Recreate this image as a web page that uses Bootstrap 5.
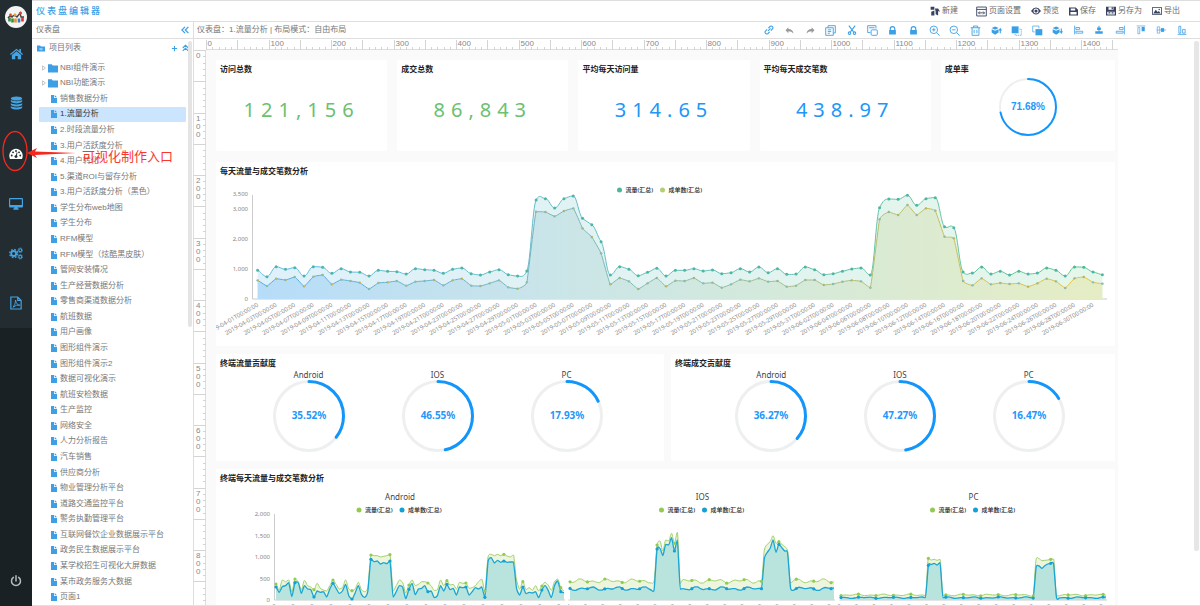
<!DOCTYPE html>
<html lang="zh-CN">
<head>
<meta charset="utf-8">
<meta name="viewport" content="width=device-width, initial-scale=1">
<title>仪表盘编辑器</title>
<link rel="stylesheet" href="https://cdn.jsdelivr.net/npm/bootstrap@5.3.0/dist/css/bootstrap.min.css">
<style>
  :root { --blue: #3b9fe6; --line: #dedede; --ink: #777; }
  body { font-family: "Liberation Sans", "Noto Sans CJK SC", sans-serif; font-size: 8px; line-height: 16px; color: var(--ink); background: #fff; }
  svg { display: block; flex: none; }
  button { border: 0; background: none; padding: 0; color: inherit; line-height: inherit; }
  a { color: inherit; text-decoration: none; }

  .rail { width: 32px; background: #192124; }
  .rail-menu { height: 328px; background: #222c31; padding-top: 6px; }
  .rail a { display: flex; align-items: center; justify-content: center; height: 50px; color: #43a3e3; }
  .rail a.brand-mark { height: 22px; }
  .rail a.active { color: #fff; }
  .rail a.power { color: #b4bcc0; }

  .topbar { height: 22px; border-top: 1px solid var(--line); border-bottom: 1px solid var(--line); }
  .topbar h1 { font-size: 9px; letter-spacing: 2px; line-height: 18px; color: #3b9fe6; margin: 0 0 0 4px; font-weight: 500; }
  .actions { gap: 10px; margin-right: 20px; color: #6b6b6b; }
  .actions button { display: flex; align-items: center; gap: 2px; }
  .actions svg { color: #39425e; }

  .explorer { width: 162px; border-right: 1px solid var(--line); }
  .pane-head { height: 17px; border-bottom: 1px solid var(--line); }
  .explorer .pane-head { padding: 0 4px 0 4px; }
  .explorer button, .root-row button { color: var(--blue); }
  .root-row { height: 18px; padding: 0 4px 0 5px; }
  .tree { display: grid; grid-auto-rows: 1fr; margin: 3px 7px 0; padding: 0; list-style: none; line-height: 14px; flex: 1 1 0; min-height: 0; }
  .tree a { display: flex; align-items: center; height: 100%; gap: 2px; padding-left: 11px; white-space: nowrap; }
  .tree a.folder { padding-left: 3px; }
  .tree a svg { color: #3f9fe4; }
  .tree a.active { background: #cce5ff; color: #333; border-radius: 1px; }
  .thumb { position: absolute; right: 1px; top: 2px; width: 4px; height: 286px; background: #e4e4e4; border-radius: 2px; }

  .work .pane-head { padding: 0 12px 0 3px; }
  .tools { width: 425px; color: #3b9fe6; }
  .tools button { width: 12px; height: 12px; }
  .tools .muted { color: #999; }
  .ruler-x { height: 11px; margin-left: 12px; }
  .ruler-y { width: 12px; }
  .stage { padding-right: 82px; }
  .stage-thumb { position: absolute; right: 1px; top: 2px; width: 5px; height: 510px; background: #e6e6e6; border-radius: 2px; }
  .board { background: #fafafa; padding: 10px 3px 0 10px; gap: 8px; font-family: "Noto Sans", "Noto Sans CJK SC", sans-serif; }
  .tile { background: #fff; border-radius: 2px; overflow: hidden; }
  .tile h2 { font-size: 8px; line-height: 18px; font-weight: 600; color: #222; margin: 0 0 0 4px; }
  .kpis { display: grid; grid-template-columns: repeat(4, 171fr) 174fr; gap: 10px; margin-bottom: 3px; }
  .kpis .tile { height: 91px; }
  .figure-num { font-size: 20px; line-height: 64px; letter-spacing: 6px; text-align: center; }
  .green { color: #6cc070; }
  .azure { color: #2196f9; }
  .pair { display: grid; grid-template-columns: 448fr 444fr; gap: 7px; }
  .pair .tile { height: 107px; }
  .gauges { display: grid; grid-template-columns: repeat(3, 1fr); padding: 0 33px 0 28px; text-align: center; color: #444; line-height: 8px; }
  .gauges.shifted { padding: 0 22px 0 36px; }
  .gauges svg, .rate svg { margin: 0 auto; }
  .gauges { margin-top: -1px; }
  .trio { display: grid; grid-template-columns: 333fr 269fr 270fr; gap: 1px; padding: 0 6px 0 17px; }
  .pct { font-weight: 700; font-size: 10px; fill: #1f97fb; text-anchor: middle; }
  .rate .pct { font-family: "Liberation Sans", sans-serif; }
  .tick-text { font-size: 6px; fill: #888; }
  .key-text { font-size: 6px; fill: #222; font-weight: 500; }
  .plot-title { font-size: 8px; fill: #444; text-anchor: middle; }
  .ruler-text { font-size: 8px; fill: #888; }
  .callout { position: absolute; left: 0; top: 128px; pointer-events: none; }
  .callout-text { position: absolute; left: 82px; top: 149px; font-size: 13px; line-height: 16px; color: #f8382c; white-space: nowrap; }
</style>
</head>
<body>
<div class="d-flex vh-100 overflow-hidden position-relative">

  <nav class="rail d-flex flex-column flex-shrink-0 justify-content-between" aria-label="主导航">
    <div class="rail-menu">
      <a href="#" class="brand-mark" aria-label="NBI"><svg width="22" height="22" viewBox="0 0 22 22"><circle cx="11" cy="11" r="11" fill="#f4f4f4"/><path d="M4.500 15.500v-4M7.500 16.500v-4" stroke="#3a8f45" stroke-width="2.600"/><path d="M10.500 16.500v-4" stroke="#e8902c" stroke-width="2.600"/><path d="M14 16.500v-4" stroke="#2f7fc4" stroke-width="2.600"/><path d="M17.500 15.500v-4" stroke="#d33" stroke-width="2.600"/><path d="M3 12q2-3 4-1q2-3 5 0l3-4 1 4h3" fill="none" stroke="#444" stroke-width="1.400"/><circle cx="15.500" cy="7" r="1.600" fill="#d9452f"/><circle cx="5.500" cy="9" r="1.400" fill="#d9452f"/><circle cx="10" cy="8.800" r="1.400" fill="#e8a02c"/></svg></a>
      <a href="#" aria-label="首页"><svg width="13" height="13" viewBox="0 0 16 16" fill="currentColor"><path d="M8 2 0 8.600l1 1.200L8 4l7 5.800 1-1.200-2.500-2.100V2.500h-2v2.300zM8 5.200 2.300 9.900V15H6.500v-4h3v4h4.200V9.900z"/></svg></a>
      <a href="#" aria-label="数据源"><svg width="13" height="14" viewBox="0 0 16 16" fill="currentColor"><ellipse cx="8" cy="2.500" rx="7" ry="2.500"/><path d="M1 4c2 2.400 12 2.400 14 0v2.300c-1 3-13 3-14 0zM1 7.900c2 2.400 12 2.400 14 0v2.300c-1 3-13 3-14 0zM1 11.800c2 2.400 12 2.400 14 0v1.700c-1 3.300-13 3.300-14 0z"/></svg></a>
      <a href="#" class="active" aria-label="可视化"><svg width="14" height="13" viewBox="0 0 18 16" fill="currentColor"><path d="M9 2a9 9 0 0 0-7.700 13h15.400A9 9 0 0 0 9 2z"/><g fill="#222c31"><circle cx="3.500" cy="10.500" r="1.200"/><circle cx="5.200" cy="6.500" r="1.200"/><circle cx="9" cy="4.800" r="1.200"/><circle cx="12.900" cy="6.500" r="1.200"/><circle cx="14.500" cy="10.500" r="1.200"/><circle cx="9" cy="12" r="1.900"/><path d="m8.500 11.500 1.400-5 1 .3-1 5z"/></g></svg></a>
      <a href="#" aria-label="大屏"><svg width="14" height="13" viewBox="0 0 18 16" fill="currentColor"><path fill-rule="evenodd" d="M1.500 1h15Q18 1 18 2.500v9q0 1.500-1.500 1.500H11l.5 1.500h1V16h-7v-1.500h1L7 13H1.500Q0 13 0 11.500v-9Q0 1 1.500 1zm0 1.500v7.500h15V2.500z"/></svg></a>
      <a href="#" aria-label="设置"><svg width="14" height="13" viewBox="0 0 18 16" fill="none" stroke="currentColor"><circle cx="6" cy="8" r="3.200" stroke-width="2.400"/><circle cx="6" cy="8" r="5.200" stroke-width="1.600" stroke-dasharray="2.200 1.900"/><circle cx="14.500" cy="3.800" r="1.900" stroke-width="1.400"/><circle cx="14.500" cy="3.800" r="3" stroke-width="1" stroke-dasharray="1.400 1"/><circle cx="14.500" cy="12.200" r="1.900" stroke-width="1.400"/><circle cx="14.500" cy="12.200" r="3" stroke-width="1" stroke-dasharray="1.400 1"/></svg></a>
      <a href="#" aria-label="报告"><svg width="12" height="14" viewBox="0 0 14 16" fill="none" stroke="currentColor" stroke-width="1.400"><path d="M1 1h8l4 4v10H1zM9 1v4h4"/><path d="M3.500 13q3-3 3-8.500q1 6 5 6q-4-1-8 2.500z" stroke-width="1.100"/></svg></a>
    </div>
    <a href="#" class="power" aria-label="退出"><svg width="12" height="12" viewBox="0 0 16 16" fill="none" stroke="currentColor" stroke-width="2" stroke-linecap="round"><path d="M8 1v7M4.500 3.200a6 6 0 1 0 7 0"/></svg></a>
  </nav>

  <div class="d-flex flex-column flex-grow-1 overflow-hidden border-bottom">
    <header class="topbar d-flex justify-content-between align-items-center flex-shrink-0">
      <h1>仪表盘编辑器</h1>
      <div class="actions d-flex align-items-center" id="actions"></div>
    </header>

    <div class="d-flex flex-grow-1 overflow-hidden">
      <aside class="explorer d-flex flex-column flex-shrink-0">
        <div class="pane-head d-flex justify-content-between align-items-center flex-shrink-0">
          <span>仪表盘</span>
          <button aria-label="收起"><svg width="8" height="8" viewBox="0 0 8 8" fill="none" stroke="currentColor" stroke-width="1.200"><path d="M4 .8.900 4 4 7.200M7.400.8 4.300 4l3.100 3.200"/></svg></button>
        </div>
        <div class="d-flex flex-column flex-grow-1 position-relative">
          <div class="root-row d-flex align-items-center flex-shrink-0">
            <svg width="8" height="7" viewBox="0 0 16 14" fill="#3b9fe6"><path d="M0 1h6l2 2h8v10H0z"/><path d="M4 8h8M8 6v5" stroke="#cde6fa" stroke-width="1.400"/></svg>
            <span class="ms-1 me-auto">项目列表</span>
            <button aria-label="添加"><svg width="7" height="7" viewBox="0 0 8 8" stroke="currentColor" stroke-width="1.200"><path d="M4 1v6M1 4h6"/></svg></button>
            <button class="ms-1" aria-label="折叠"><svg width="7" height="8" viewBox="0 0 8 8" fill="none" stroke="currentColor" stroke-width="1.200"><path d="M.8 4 4 .9 7.200 4M.8 7.400 4 4.300l3.200 3.100"/></svg></button>
          </div>
          <ul class="tree" id="tree"></ul>
          <div class="thumb"></div>
        </div>
      </aside>

      <main class="work d-flex flex-column flex-grow-1 overflow-hidden">
        <div class="pane-head d-flex justify-content-between align-items-center flex-shrink-0">
          <span>仪表盘：1.流量分析 | 布局模式：自由布局</span>
          <div class="tools d-flex justify-content-between" id="tools"></div>
        </div>
        <div class="stage d-flex flex-column flex-grow-1 overflow-hidden position-relative">
          <div class="ruler-x flex-shrink-0" id="rulerX"></div>
          <div class="d-flex flex-grow-1 overflow-hidden">
            <div class="ruler-y flex-shrink-0 overflow-hidden" id="rulerY"></div>
            <div class="board d-flex flex-column flex-grow-1 overflow-hidden">
              <section class="kpis flex-shrink-0">
                <div class="tile"><h2>访问总数</h2><div class="figure-num green">121,156</div></div>
                <div class="tile"><h2>成交总数</h2><div class="figure-num green">86,843</div></div>
                <div class="tile"><h2>平均每天访问量</h2><div class="figure-num azure">314.65</div></div>
                <div class="tile"><h2>平均每天成交笔数</h2><div class="figure-num azure">438.97</div></div>
                <div class="tile rate"><h2>成单率</h2><div data-gauge="71.68" data-size="58" data-stroke="2"></div></div>
              </section>
              <section class="tile flex-shrink-0"><h2>每天流量与成交笔数分析</h2><div id="daily"></div></section>
              <section class="pair flex-shrink-0">
                <div class="tile"><h2>终端流量贡献度</h2>
                  <div class="gauges">
                    <div>Android<div data-gauge="35.52"></div></div>
                    <div>IOS<div data-gauge="46.55"></div></div>
                    <div>PC<div data-gauge="17.93"></div></div>
                  </div></div>
                <div class="tile"><h2>终端成交贡献度</h2>
                  <div class="gauges shifted">
                    <div>Android<div data-gauge="36.27"></div></div>
                    <div>IOS<div data-gauge="47.27"></div></div>
                    <div>PC<div data-gauge="16.47"></div></div>
                  </div></div>
              </section>
              <section class="tile flex-shrink-0"><h2>终端每天流量与成交笔数分析</h2>
                <div class="trio"><div id="android"></div><div id="ios"></div><div id="pc"></div></div>
              </section>
            </div>
          </div>
          <div class="stage-thumb"></div>
        </div>
      </main>
    </div>
  </div>

  <svg class="callout" width="80" height="48" viewBox="0 0 80 48"><ellipse cx="15" cy="23" rx="12" ry="19.500" fill="none" stroke="#f5281e" stroke-width="1.300"/><path d="M27 25l10-5-2 3.500L76 25l-41 2 2 3z" fill="#f5281e"/></svg>
  <div class="callout-text">可视化制作入口</div>
</div>

<script src="https://cdn.jsdelivr.net/npm/bootstrap@5.3.0/dist/js/bootstrap.bundle.min.js"></script>
<script>
const $ = id => document.getElementById(id);
const icon = (body, size, attrs = 'fill="currentColor"') => `<svg width="${size}" height="${size}" viewBox="0 0 16 16" ${attrs}>${body}</svg>`;
const outline = 'fill="none" stroke="currentColor" stroke-width="1.3"';

/* Project tree */
const folder = icon('<path d="M0 2h6l1.500 2H16v11H0z"/>', 10);
const file = icon('<path d="M2 0h6v6h6v10H2zM9.500 0 14 4.500H9.500z"/>', 8);
const arrow = '<svg width="4" height="6" viewBox="0 0 4 6" fill="none" stroke="#aaa" stroke-width=".7"><path d="M.6.800 3.400 3 .6 5.200z"/></svg>';
const projects = ['销售数据分析','1.流量分析','2.时段流量分析','3.用户活跃度分析','4.用户转化','5.渠道ROI与留存分析','3.用户活跃度分析（黑色）','学生分布web地图','学生分布','RFM模型','RFM模型（炫酷黑皮肤）','管网安装情况','生产经营数据分析','零售商渠道数据分析','航班数据','用户画像','图形组件演示','图形组件演示2','数据可视化演示','航班安检数据','生产监控','网络安全','人力分析报告','汽车销售','供应商分析','物业管理分析平台','道路交通监控平台','警务执勤管理平台','互联网餐饮企业数据展示平台','政务民生数据展示平台','某学校招生可视化大屏数据','某市政务服务大数据','页面1'];
$('tree').innerHTML = ['NBI组件演示','NBI功能演示'].map(t => `<li><a href="#" class="folder">${arrow}${folder}${t}</a></li>`).join('')
  + projects.map((t, i) => `<li><a href="#"${i === 1 ? ' class="active"' : ''}>${file}${t}</a></li>`).join('');

/* Header actions */
$('actions').innerHTML = [
  ['新建', icon('<path d="M1 1h6v5H1zM2 9l5-2v8H2zM8 4h5l3 5-3-1v7l-4-2V9z"/>', 10), 'me-2'],
  ['页面设置', icon('<path d="M1 1.500h14v13H1zM1 5h14M4 10h8M5.500 8 3.500 10l2 2M10.500 8l2 2-2 2"/>', 11, outline), ''],
  ['预览', icon('<path fill-rule="evenodd" d="M0 8q8-11 16 0-8 11-16 0zm8-4a4 4 0 1 0 0 8 4 4 0 0 0 0-8z"/><circle cx="8" cy="8" r="2.500"/>', 10), ''],
  ['保存', icon('<path fill-rule="evenodd" d="M0 1h12l4 4v10H0zM3 2.500V6h8V2.500zM2.500 9v4.500h11V9z"/>', 9), ''],
  ['另存为', icon('<path fill-rule="evenodd" d="M0 1h16v14H0zM4 2v4h8V2zM2 9v4.500h12V9z"/><path d="M9 2h2v3H9zM4 10h3v2H4zM9 10h3v2H9z"/>', 10), ''],
  ['导出', icon('<path fill-rule="evenodd" d="M0 2h16v12H0zm1.300 1.300v9.400h13.400V3.300z"/><path d="m2 12 4-6 3 3.500L11 8l3 4z"/><circle cx="11.500" cy="5.500" r="1.200"/>', 10), '']
].map(([t, g, c]) => `<button class="${c}">${g}${t}</button>`).join('');

/* Editing tools */
const lock = icon('<path fill-rule="evenodd" d="M3 7V5a5 5 0 0 1 10 0v2h1v8H2V7zm2 0h6V5a3 3 0 0 0-6 0z"/>', 9);
const cube = '<path d="m6 2 5 2.500-5 2.500-5-2.500zM1 6l5 2.500L11 6v5l-5 3-5-3z"/>';
$('tools').innerHTML = [
  ['链接', icon('<path d="M6.500 9.500l4-4M7 5l3-3q2-1 3.500.5T14 6l-3 3M9 11l-3 3q-2 1-3.500-.5T2 10l3-3"/>', 10, 'fill="none" stroke="currentColor" stroke-width="1.700"')],
  ['撤销', icon('<path d="M6 2v3.500q8 0 9 8-3-4-9-4V13L1 7.500z"/>', 9), 'muted'],
  ['重做', icon('<path d="M10 2v3.500q-8 0-9 8 3-4 9-4V13l5-5.500z"/>', 9), 'muted'],
  ['复制', icon('<path d="M4.500 4V1H15v10.500h-3M1 4h11v11H1zM4 7h5M4 9.500h5M4 12h3"/>', 11, outline)],
  ['剪切', icon('<path d="M3 1l7.500 10M13 1 5.500 11"/><circle cx="4" cy="13" r="2"/><circle cx="12" cy="13" r="2"/>', 10, 'fill="none" stroke="currentColor" stroke-width="1.700"')],
  ['粘贴', icon('<path d="M5 11H1V1h12v4M3 4h8"/><rect x="6" y="7" width="9" height="8" rx="1.500"/>', 11, outline)],
  ['锁定', lock], ['解锁', lock],
  ['放大', icon('<circle cx="7" cy="7" r="5.500"/><path d="m11 11 4.500 4.500M4.500 7h5M7 4.500v5"/>', 11, outline)],
  ['缩小', icon('<circle cx="7" cy="7" r="5.500"/><path d="m11 11 4.500 4.500M4.500 7h5"/>', 11, outline)],
  ['删除', icon('<path d="M1 4h14M5 4V1.500h6V4M3 4v11h10V4M6 7v5M10 7v5"/>', 11, outline)],
  ['置顶', icon(cube + '<path d="M13.500 4 16 8h-1.700v4h-1.600V8H11z"/>', 11)],
  ['上移', icon('<path d="M1 2h10v10H1z"/><path d="M12 6h3v9H6v-2" fill="none" stroke="currentColor" stroke-dasharray="2 1"/>', 11)],
  ['下移', icon('<path d="M1 1.500h9V5M1 1.500V10h3" fill="none" stroke="currentColor"/><path d="M5 6h10v9H5z"/>', 11)],
  ['置底', icon(cube + '<path d="M13.500 13 16 9h-1.700V5h-1.600v4H11z"/>', 11)],
  ['左对齐', icon('<path d="M1 1v14M3 4h6v3H3zM3 10h11v3H3z"/>', 10, outline)],
  ['水平居中', icon('<path d="M7.200 1h1.600v3H11v4H8.800v2H14v4H2v-4h5.200V8H5V4h2.200z"/>', 10)],
  ['右对齐', icon('<path d="M15 1v14M7 4h6v3H7zM2 10h11v3H2z"/>', 10, outline)],
  ['顶对齐', icon('<path d="M1 1.500h14M3 4h3v10H3z" fill="none" stroke="currentColor"/><path d="M9 3h5v7H9z"/>', 10)],
  ['垂直居中', icon('<path d="M2 3h4v10H2zM1 8h15" fill="none" stroke="currentColor"/><path d="M8 5h5v6H8z"/>', 10)],
  ['底对齐', icon('<path d="M3 2h3v11H3zM9 7h4v6H9zM1 15h14" fill="none" stroke="currentColor" stroke-width="1.300"/>', 10)]
].map(([t, g, c]) => `<button class="d-flex align-items-center justify-content-center ${c || ''}" aria-label="${t}">${g}</button>`).join('');

/* Rulers: 100 canvas units span 62.5 screen pixels */
const unit = .625;
function rulers() {
  const w = $('rulerX').clientWidth, h = $('rulerY').clientHeight;
  let s = `<path d="M0 10.500H${w}" stroke="#ddd"/>`;
  for (let u = 0; u * unit < w; u += 10) {
    const x = Math.round(u * unit) + .5;
    s += `<path d="M${x} ${u % 50 ? 8 : 1}V11" stroke="#d4d4d4"/>`;
    if (u % 100 === 0) s += `<text class="ruler-text" x="${x + 1}" y="7">${u}</text>`;
  }
  $('rulerX').innerHTML = `<svg width="${w}" height="11">${s}</svg>`;
  s = `<path d="M11.500 0V${h}" stroke="#ddd"/>`;
  for (let u = 0; u * unit < h; u += 10) {
    const y = Math.round(u * unit) + .5;
    s += `<path d="M${u % 50 ? 9 : 0} ${y}H12" stroke="#d4d4d4"/>`;
    if (u % 100 === 0) [...String(u)].forEach((d, i) => s += `<text class="ruler-text" x="2" y="${y + 7 + i * 8}">${d}</text>`);
  }
  $('rulerY').innerHTML = `<svg width="12" height="${h}">${s}</svg>`;
}

/* Ring gauges */
function gauges() {
  document.querySelectorAll('[data-gauge]').forEach(el => {
    const v = +el.dataset.gauge, size = +el.dataset.size || 74, sw = +el.dataset.stroke || 3;
    const c = size / 2, r = c - sw / 2 - (size > 60 ? 1 : 0), len = 2 * Math.PI * r;
    el.innerHTML = `<svg width="${size}" height="${size}"><circle cx="${c}" cy="${c}" r="${r}" fill="none" stroke="#eeeff0" stroke-width="${sw}"/>
      <circle cx="${c}" cy="${c}" r="${r}" fill="none" stroke="#1296fb" stroke-width="${sw}" stroke-linecap="round" stroke-dasharray="${len * v / 100} ${len}" transform="rotate(-90 ${c} ${c})"/>
      <text class="pct" x="${c}" y="${c + 3}">${v.toFixed(2)}%</text></svg>`;
  });
}

/* Line helpers */
const points = (a, x0, step, base, k) => a.map((v, i) => [x0 + i * step, base - v * k]);
function curve(p, t) {
  let d = `M${p[0]}`;
  for (let i = 0; i < p.length - 1; i++) {
    const a = p[i - 1] || p[i], b = p[i], c = p[i + 1], e = p[i + 2] || c;
    const slope = (l, m, n) => (m[1] - l[1]) * (n[1] - m[1]) <= 0 ? 0 : (n[1] - l[1]) * Math.min(t, .1);
    d += `C${b[0] + (c[0] - a[0]) * t} ${b[1] + slope(a, b, c)} ${c[0] - (e[0] - b[0]) * t} ${c[1] - slope(b, c, e)} ${c}`;
  }
  return d;
}
const area = (p, base, t) => `${curve(p, t)}V${base}H${p[0][0]}Z`;
const key = (x, y, c, t) => `<circle cx="${x}" cy="${y}" r="2.500" fill="${c}"/><text class="key-text" x="${x + 6}" y="${y + 2}">${t}</text>`;

/* Daily visits and orders, 90 units = 1,000 */
const visits = [86,67,97,89,94,69,97,95,77,91,81,80,69,86,83,82,75,91,88,86,77,89,93,76,72,81,88,73,69,84,297,301,273,301,309,242,223,172,72,97,89,70,80,92,69,86,86,91,84,87,76,79,91,81,96,79,91,74,75,96,88,73,76,83,90,93,72,274,300,299,311,281,301,304,217,214,81,78,96,75,83,72,83,75,78,93,86,69,96,95,81,73];
const orders = [56,39,61,57,66,38,67,72,44,58,54,49,30,48,50,54,40,52,54,57,41,56,61,40,39,47,56,35,31,50,262,261,248,264,272,212,186,137,44,63,53,30,47,63,38,55,54,63,47,49,34,44,58,53,62,52,54,37,40,57,57,42,45,52,56,53,34,239,261,252,282,252,272,265,187,182,54,41,62,44,48,45,47,37,47,61,53,33,62,66,50,46];
function daily() {
  const el = $('daily'), w = el.clientWidth, h = 166, x0 = 37, x1 = w - 8, base = 119, step = (x1 - x0) / visits.length, k = 1 / 3;
  const pv = points(visits, x0 + step / 2, step, base, k), po = points(orders, x0 + step / 2, step, base, k);
  let s = `<defs>
    <linearGradient id="gv" gradientUnits="userSpaceOnUse" x1="0" x2="${w}"><stop stop-color="#def0fc"/><stop offset=".5" stop-color="#e1f3f1"/><stop offset="1" stop-color="#e5f6ea"/></linearGradient>
    <linearGradient id="go" gradientUnits="userSpaceOnUse" x1="0" x2="${w}"><stop stop-color="#b3dbfb"/><stop offset=".37" stop-color="#cae5e9"/><stop offset=".6" stop-color="#d3e9dc"/><stop offset="1" stop-color="#e6edc3"/></linearGradient>
    <linearGradient id="lv" gradientUnits="userSpaceOnUse" x1="0" x2="${w}"><stop stop-color="#62b8ee"/><stop offset="1" stop-color="#67c68c"/></linearGradient>
    <linearGradient id="lo" gradientUnits="userSpaceOnUse" x1="0" x2="${w}"><stop stop-color="#4ba8ea"/><stop offset=".5" stop-color="#86b9ac"/><stop offset="1" stop-color="#efc22f"/></linearGradient></defs>
    <path d="M${x0 - .5} 15V${base}H${x1}" fill="none" stroke="#ccc"/>
    <path d="${area(pv, base, .2)}" fill="url(#gv)"/><path d="${area(po, base, .05)}" fill="url(#go)"/>
    <path d="${curve(pv, .2)}" fill="none" stroke="url(#lv)"/><path d="${curve(po, .05)}" fill="none" stroke="url(#lo)"/>`;
  pv.forEach(p => s += `<circle cx="${p[0]}" cy="${p[1]}" r="1.500" fill="#4bb7a4"/>`);
  po.forEach(p => s += `<circle cx="${p[0]}" cy="${p[1]}" r="1.200" fill="#7fb9b4"/><circle cx="${p[0] + .6}" cy="${p[1]}" r=".7" fill="#d9b94e"/>`);
  [['3,500', 315], ['3,000', 270], ['2,000', 180], ['1,000', 90], ['0', 0]].forEach(([t, v]) => s += `<text class="tick-text" text-anchor="end" x="${x0 - 5}" y="${base - v * k + 2}">${t}</text>`);
  for (let i = 0; i < 91; i += 2) {
    const x = pv[i][0], day = new Date(Date.UTC(2019, 3, 1 + i)).toISOString().slice(0, 10);
    s += `<text class="tick-text" text-anchor="end" transform="translate(${x + 1} ${base + 7}) rotate(-30)">${day}T00:00:00</text>`;
  }
  const m = w / 2 - 46;
  s += key(m, 10, '#4bb79a', '流量(汇总)') + key(m + 43, 10, '#b3cf72', '成单数(汇总)');
  el.innerHTML = `<svg width="${w}" height="${h}">${s}</svg>`;
}

/* Per-device series, 257 units = 2,000 */
const level = a => a.map(v => 405 - v);
const wave = (base, amp, seed) => Array.from({length: 92}, (_, i) => base + amp * Math.sin(i * 1.05 + seed) * Math.cos(i * .37 + seed * 2));
const raise = (a, ...bumps) => { bumps.forEach(([at, vals]) => vals.forEach((v, i) => a[at + i] = v)); return a; };
const devices = {
  android: { title: 'Android', x0: 42, axis: true,
    v: level([357,375,345,350,345,380,342,350,374,346,362,366,374,355,370,375,378,362,345,358,372,368,345,372,377,372,352,374,380,368,270,272,272,276,274,272,269,378,362,345,352,384,360,345,362,358,350,350,354,362,376,374,345,362,347,360,358,372,352,355,354,370,368,362,350,342,378,276,268,272,268,272,268,273,276,270,345,372,350,374,368,376,362,378,363,352,360,376,350,342,368,378]),
    o: level([366,382,365,362,353,395,353,352,385,362,372,374,396,378,382,380,396,372,355,370,385,378,358,392,402,384,362,388,397,380,283,290,288,297,293,296,288,396,380,362,366,401,373,355,389,372,370,362,380,378,398,392,362,378,358,374,370,390,366,368,366,390,380,368,372,366,397,290,278,294,286,292,288,292,291,291,370,390,366,386,382,384,380,398,375,362,376,398,362,348,380,383]) },
  ios: { title: 'IOS', x0: 1,
    v: raise(wave(57, 7, 1), [30, [165,177,147,180,177,200,170,203,50]], [66, [56,150,167,175,193,170,175,167,160,147,50]]),
    o: raise(wave(34, 6, 3), [30, [153,155,133,167,165,187,147,180,33]], [66, [34,125,143,155,180,143,167,157,147,141,37]]) },
  pc: { title: 'PC', x0: 2,
    v: raise(wave(15, 3, 2), [30, [125,120,122,119,122]], [67, [122,124,118,119,120,122,123]]),
    o: raise(wave(7, 2.500, 4), [30, [104,106,110,105,112]], [67, [98,102,95,103,108,110,108]]) }
};
function device(id) {
  const { title, x0, axis, v, o } = devices[id], el = $(id), w = el.clientWidth, base = 113, k = 1 / 3;
  const step = (w - 3 - x0 - 1) / (v.length - 1);
  const pv = points(v, x0 + 1, step, base, k), po = points(o, x0 + 1, step, base, k);
  let s = `<path d="M${x0 - .5} ${axis ? 27 : base}V${base}H${w - 2}" fill="none" stroke="#ccc"/>
    <path d="${area(pv, base, .15)}" fill="#edf6dc"/><path d="${area(po, base, .1)}" fill="#b9e4de"/>
    <path d="${curve(pv, .15)}" fill="none" stroke="#a3d06d"/><path d="${curve(po, .1)}" fill="none" stroke="#1ba5d4" stroke-width="1.300"/>`;
  for (let i = 0; i < v.length; i += 6) {
    s += `<circle cx="${pv[i][0]}" cy="${pv[i][1]}" r="1.600" fill="#93cb52"/><circle cx="${po[i][0]}" cy="${po[i][1]}" r="1.600" fill="#12a0d5"/>
      <text class="tick-text" text-anchor="end" transform="translate(${pv[i][0] + 1} ${base + 7}) rotate(-30)">2019-04-01T00:00:00</text>`;
  }
  if (axis) ['0', '500', '1,000', '1,500', '2,000'].forEach((t, i) => s += `<text class="tick-text" text-anchor="end" x="${x0 - 5}" y="${base - i * 21.400 + 2}">${t}</text>`);
  const c = w / 2;
  s += `<text class="plot-title" x="${c}" y="13">${title}</text>` + key(c - 41, 23, '#93cb52', '流量(汇总)') + key(c + 2, 23, '#12a0d5', '成单数(汇总)');
  el.innerHTML = `<svg width="${w}" height="150">${s}</svg>`;
}

function draw() { rulers(); daily(); Object.keys(devices).forEach(device); }
gauges();
draw();
addEventListener('resize', draw);
</script>
</body>
</html>
